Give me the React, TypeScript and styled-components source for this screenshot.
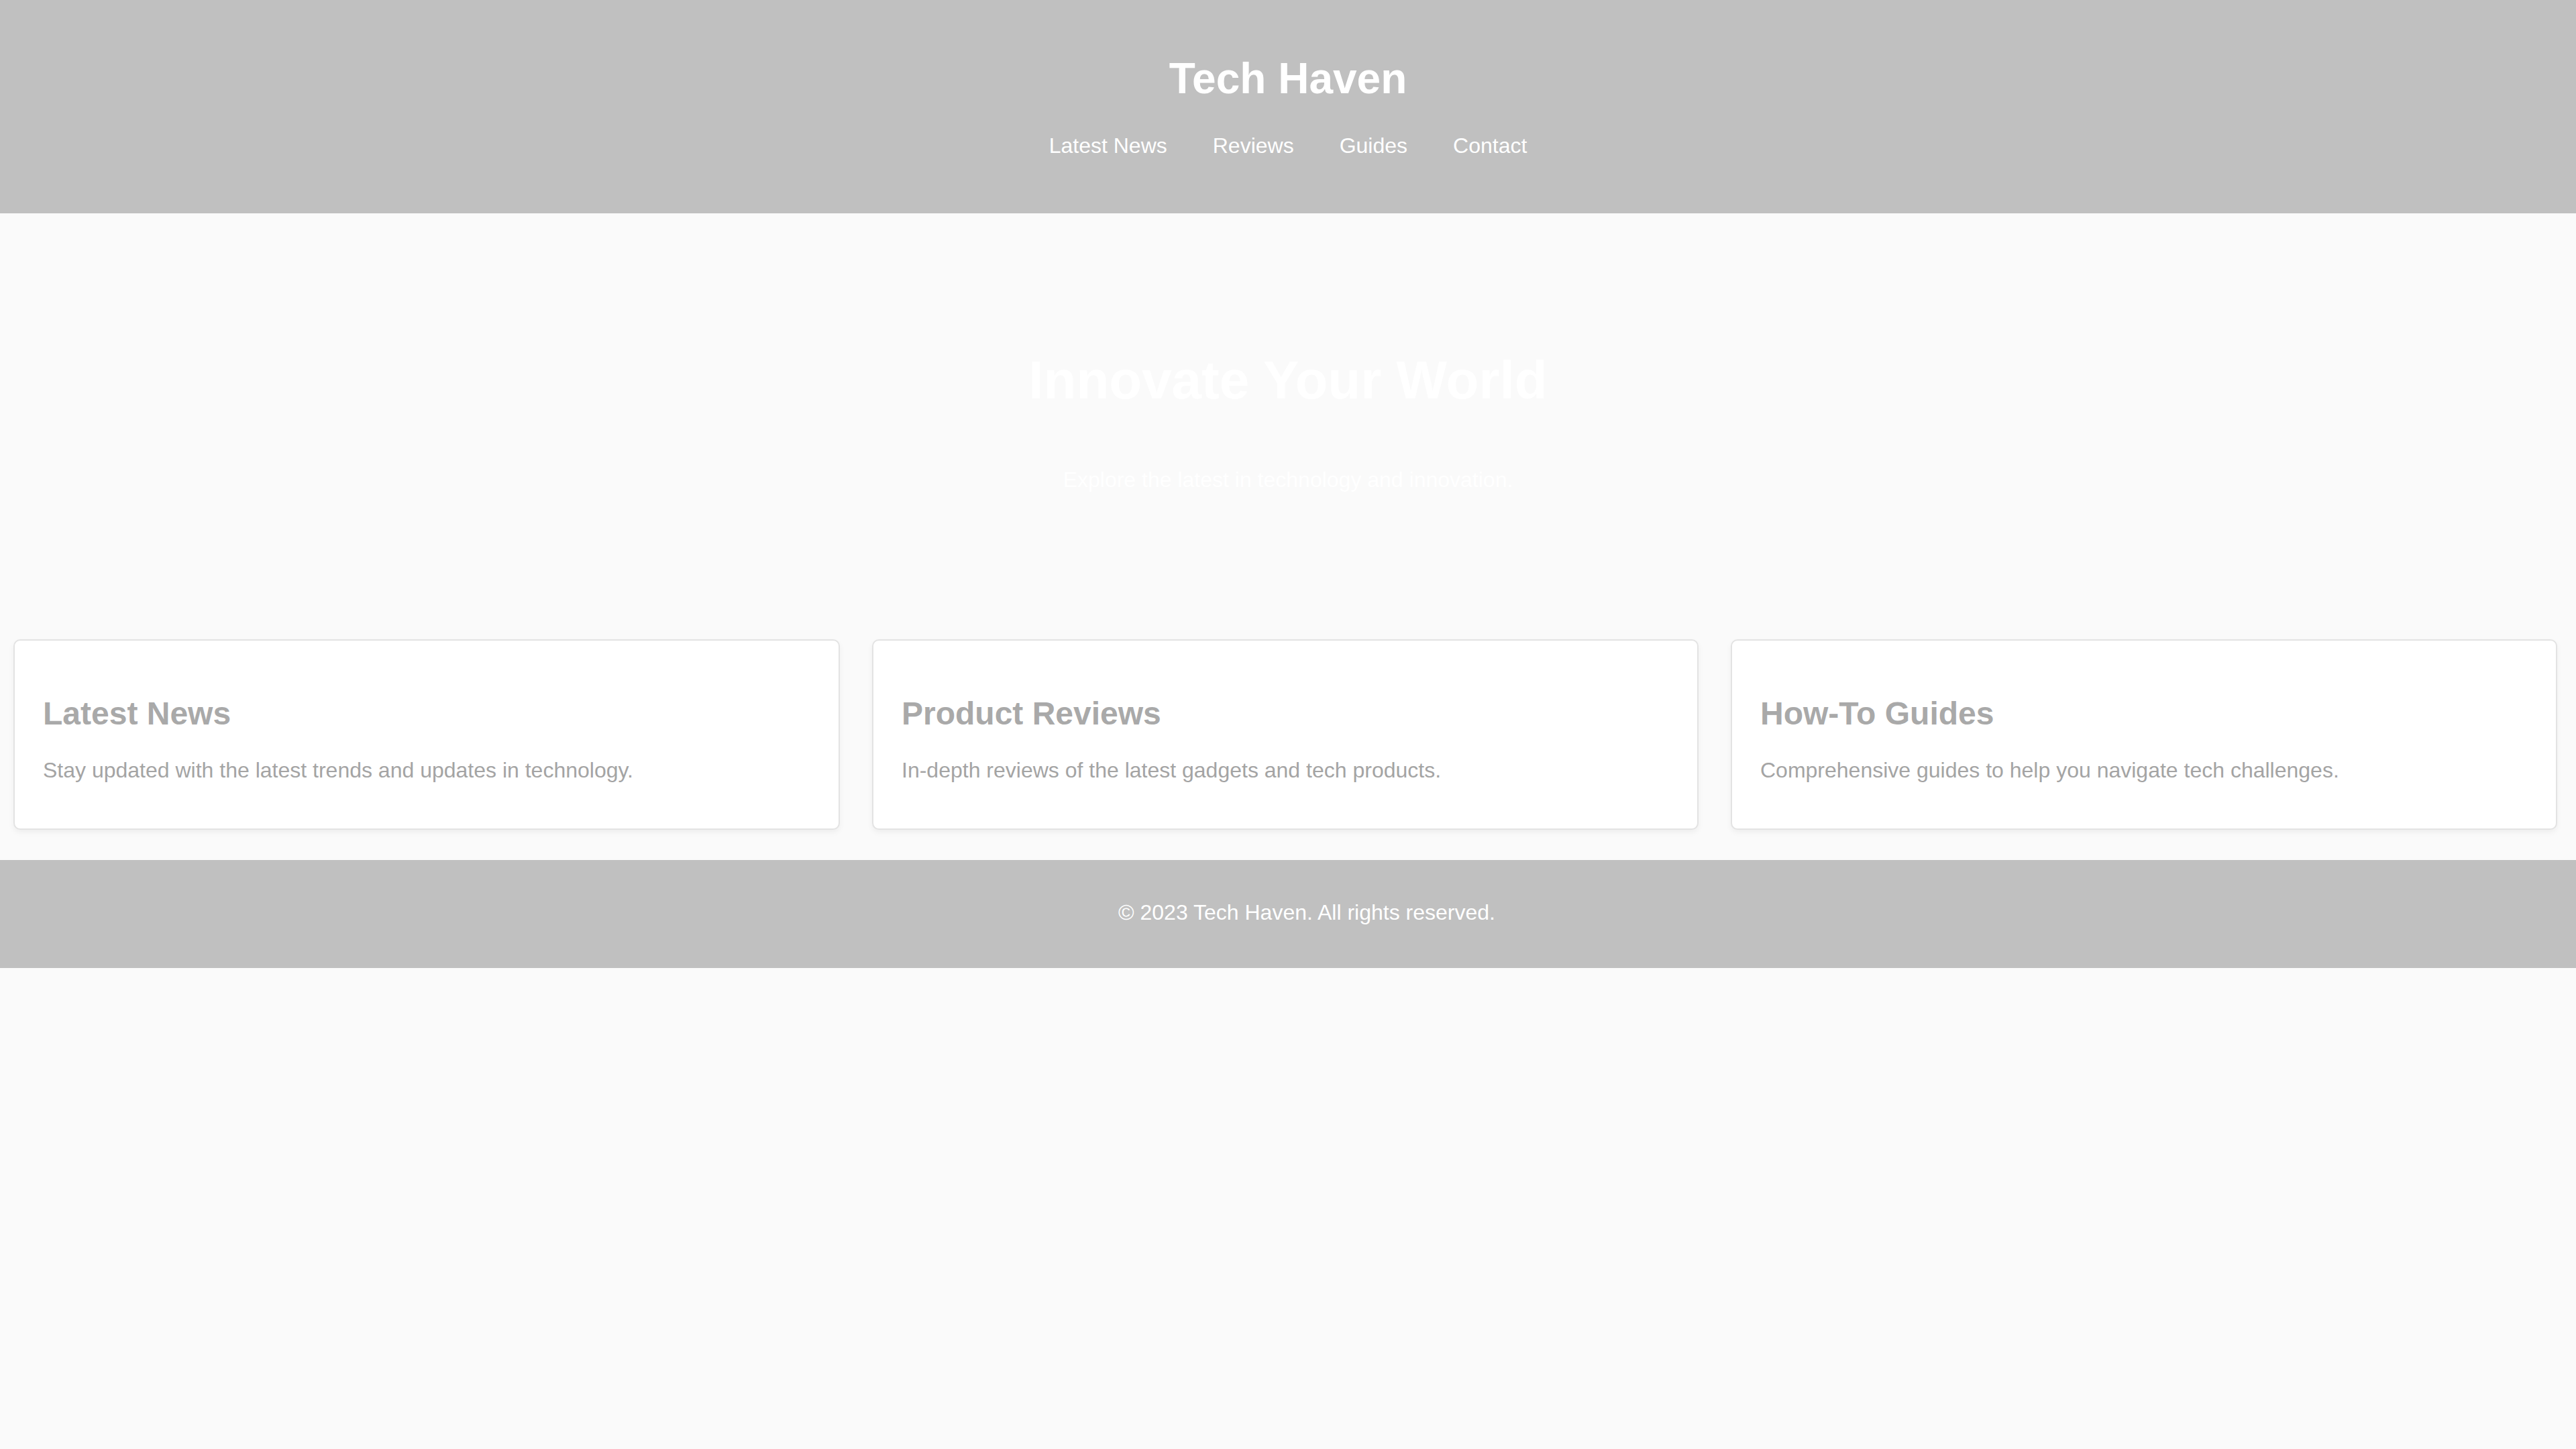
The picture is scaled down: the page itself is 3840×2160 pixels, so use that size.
import React from "react";
import styled, { createGlobalStyle } from "styled-components";

const GlobalStyle = createGlobalStyle`
  html, body {
    margin: 0;
    padding: 0;
    background: #fafafa;
    min-height: 100%;
  }
  body {
    font-family: "Liberation Sans", Arial, Helvetica, sans-serif;
  }
  * { box-sizing: border-box; }
`;

const Page = styled.div`
  display: flex;
  flex-direction: column;
  min-height: 100vh;
  background: #fafafa;
`;

const Header = styled.header`
  background: #c0c0c0;
  padding: 80px 0 82px;
  text-align: center;
`;

const SiteTitle = styled.h1`
  margin: 0 0 45px;
  font-size: 64px;
  font-weight: 700;
  line-height: normal;
  color: #ffffff;
`;

const NavList = styled.ul`
  display: flex;
  justify-content: center;
  gap: 68px;
  margin: 0;
  padding: 0;
  list-style: none;
`;

const NavLink = styled.a`
  font-size: 32px;
  line-height: normal;
  color: #ffffff;
  text-decoration: none;
`;

const Hero = styled.section`
  padding: 203px 0 219px;
  text-align: center;
`;

const HeroTitle = styled.h2`
  margin: 0 0 84px;
  font-size: 80px;
  font-weight: 700;
  line-height: normal;
  color: #ffffff;
`;

const HeroText = styled.p`
  margin: 0;
  font-size: 32px;
  line-height: normal;
  color: #ffffff;
`;

const CardGrid = styled.section`
  display: grid;
  grid-template-columns: repeat(3, 1fr);
  gap: 48px;
  padding: 0 28px 45px 20px;
`;

const Card = styled.article`
  background: #ffffff;
  border: 2px solid #e3e3e3;
  border-radius: 10px;
  padding: 0 42px 40px;
  box-shadow: 0 4px 8px rgba(0, 0, 0, 0.05);
`;

const CardTitle = styled.h3`
  margin: 81px 0 39px;
  font-size: 48px;
  font-weight: 700;
  line-height: normal;
  color: #a9a9a9;
`;

const CardText = styled.p`
  margin: 0 0 28px;
  font-size: 32px;
  line-height: normal;
  color: #a4a4a4;
`;

const Footer = styled.footer`
  background: #c0c0c0;
  padding: 60px 0 64px 56px;
  text-align: center;
`;

const FooterText = styled.p`
  margin: 0;
  font-size: 32px;
  line-height: normal;
  color: #ffffff;
`;

const navItems = ["Latest News", "Reviews", "Guides", "Contact"];

const cards = [
  {
    title: "Latest News",
    text: "Stay updated with the latest trends and updates in technology.",
  },
  {
    title: "Product Reviews",
    text: "In-depth reviews of the latest gadgets and tech products.",
  },
  {
    title: "How-To Guides",
    text: "Comprehensive guides to help you navigate tech challenges.",
  },
];

export default function App() {
  return (
    <>
      <GlobalStyle />
      <Page>
        <Header>
          <SiteTitle>Tech Haven</SiteTitle>
          <nav>
            <NavList>
              {navItems.map((item) => (
                <li key={item}>
                  <NavLink href="#">{item}</NavLink>
                </li>
              ))}
            </NavList>
          </nav>
        </Header>
        <Hero>
          <HeroTitle>Innovate Your World</HeroTitle>
          <HeroText>Explore the latest in technology and innovation.</HeroText>
        </Hero>
        <CardGrid>
          {cards.map((c) => (
            <Card key={c.title}>
              <CardTitle>{c.title}</CardTitle>
              <CardText>{c.text}</CardText>
            </Card>
          ))}
        </CardGrid>
        <Footer>
          <FooterText>© 2023 Tech Haven. All rights reserved.</FooterText>
        </Footer>
      </Page>
    </>
  );
}
